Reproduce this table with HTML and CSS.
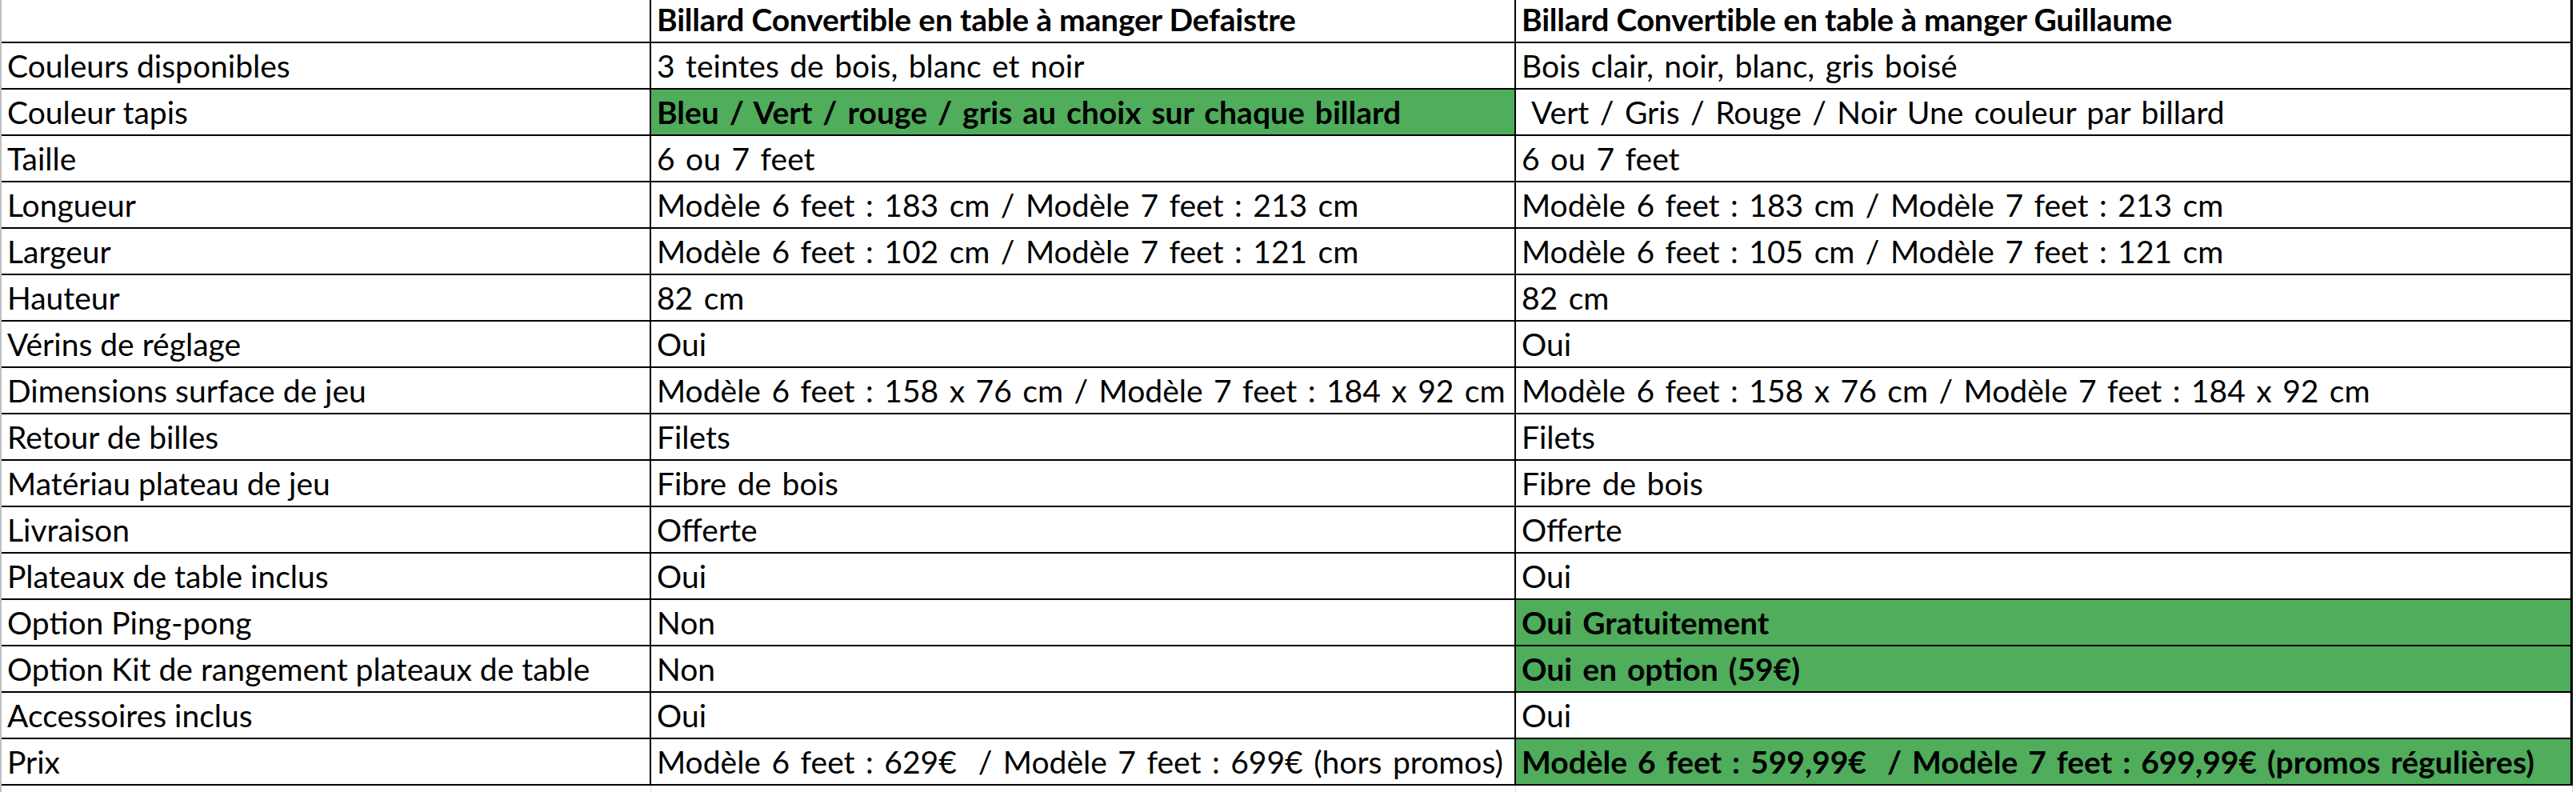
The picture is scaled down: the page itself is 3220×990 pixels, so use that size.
FILE: index.html
```html
<!DOCTYPE html>
<html lang="fr">
<head>
<meta charset="utf-8">
<title>Comparatif billards convertibles</title>
<link rel="stylesheet" href="styles.css">
</head>
<body>
<div class="sheet">
  <div class="row head">
    <div class="cell c0"></div>
    <div class="cell c1 b">Billard Convertible en table à manger Defaistre</div>
    <div class="cell c2 b">Billard Convertible en table à manger Guillaume</div>
  </div>
  <div class="row">
    <div class="cell c0">Couleurs disponibles</div>
    <div class="cell c1">3 teintes de bois, blanc et noir</div>
    <div class="cell c2">Bois clair, noir, blanc, gris boisé</div>
  </div>
  <div class="row">
    <div class="cell c0">Couleur tapis</div>
    <div class="cell c1 b hl">Bleu / Vert / rouge / gris au choix sur chaque billard</div>
    <div class="cell c2"> Vert / Gris / Rouge / Noir Une couleur par billard</div>
  </div>
  <div class="row">
    <div class="cell c0">Taille</div>
    <div class="cell c1">6 ou 7 feet</div>
    <div class="cell c2">6 ou 7 feet</div>
  </div>
  <div class="row">
    <div class="cell c0">Longueur</div>
    <div class="cell c1">Modèle 6 feet : 183 cm / Modèle 7 feet : 213 cm</div>
    <div class="cell c2">Modèle 6 feet : 183 cm / Modèle 7 feet : 213 cm</div>
  </div>
  <div class="row">
    <div class="cell c0">Largeur</div>
    <div class="cell c1">Modèle 6 feet : 102 cm / Modèle 7 feet : 121 cm</div>
    <div class="cell c2">Modèle 6 feet : 105 cm / Modèle 7 feet : 121 cm</div>
  </div>
  <div class="row">
    <div class="cell c0">Hauteur</div>
    <div class="cell c1">82 cm</div>
    <div class="cell c2">82 cm</div>
  </div>
  <div class="row">
    <div class="cell c0">Vérins de réglage</div>
    <div class="cell c1">Oui</div>
    <div class="cell c2">Oui</div>
  </div>
  <div class="row">
    <div class="cell c0">Dimensions surface de jeu</div>
    <div class="cell c1">Modèle 6 feet : 158 x 76 cm / Modèle 7 feet : 184 x 92 cm</div>
    <div class="cell c2">Modèle 6 feet : 158 x 76 cm / Modèle 7 feet : 184 x 92 cm</div>
  </div>
  <div class="row">
    <div class="cell c0">Retour de billes</div>
    <div class="cell c1">Filets</div>
    <div class="cell c2">Filets</div>
  </div>
  <div class="row">
    <div class="cell c0">Matériau plateau de jeu</div>
    <div class="cell c1">Fibre de bois</div>
    <div class="cell c2">Fibre de bois</div>
  </div>
  <div class="row">
    <div class="cell c0">Livraison</div>
    <div class="cell c1">Offerte</div>
    <div class="cell c2">Offerte</div>
  </div>
  <div class="row">
    <div class="cell c0">Plateaux de table inclus</div>
    <div class="cell c1">Oui</div>
    <div class="cell c2">Oui</div>
  </div>
  <div class="row">
    <div class="cell c0">Option Ping-pong</div>
    <div class="cell c1">Non</div>
    <div class="cell c2 b hl">Oui Gratuitement</div>
  </div>
  <div class="row">
    <div class="cell c0">Option Kit de rangement plateaux de table</div>
    <div class="cell c1">Non</div>
    <div class="cell c2 b hl">Oui en option (59€)</div>
  </div>
  <div class="row">
    <div class="cell c0">Accessoires inclus</div>
    <div class="cell c1">Oui</div>
    <div class="cell c2">Oui</div>
  </div>
  <div class="row">
    <div class="cell c0">Prix</div>
    <div class="cell c1">Modèle 6 feet : 629€  / Modèle 7 feet : 699€ (hors promos)</div>
    <div class="cell c2 b hl">Modèle 6 feet : 599,99€  / Modèle 7 feet : 699,99€ (promos régulières)</div>
  </div>
  <div class="row filler">
    <div class="cell c0"></div>
    <div class="cell c1"></div>
    <div class="cell c2"></div>
  </div>
</div>
</body>
</html>
```

FILE: styles.css
```css
html, body {
  margin: 0;
  padding: 0;
  background: #ffffff;
}

body {
  width: 3220px;
  height: 990px;
  overflow: hidden;
  font-family: Lato, "Liberation Sans", sans-serif;
  color: #000000;
}

.sheet {
  margin-top: -4px;
  border-left: 2px solid #bfbfbf;
}

.row {
  display: grid;
  grid-template-columns: 812px 1081px 1321px;
  border-bottom: 2px solid #000000;
  width: 3214px;
}

.cell {
  height: 56px;
  line-height: 56px;
  font-size: 39px;
  padding: 0 6px 0 7px;
  white-space: pre;
  overflow: hidden;
  border-right: 2px solid #000000;
}

.c1,
.c2 {
  word-spacing: 3.5px;
}

.c2 {
  border-right-width: 3px;
}

.b {
  font-weight: 700;
}

.head .cell {
  word-spacing: 0;
  letter-spacing: -0.2px;
}

.hl {
  background: #4fad5b;
}

.filler {
  border-bottom: none;
}

.filler .cell {
  height: 10px;
  border-right: 1px solid #dcdcdc;
}
```
